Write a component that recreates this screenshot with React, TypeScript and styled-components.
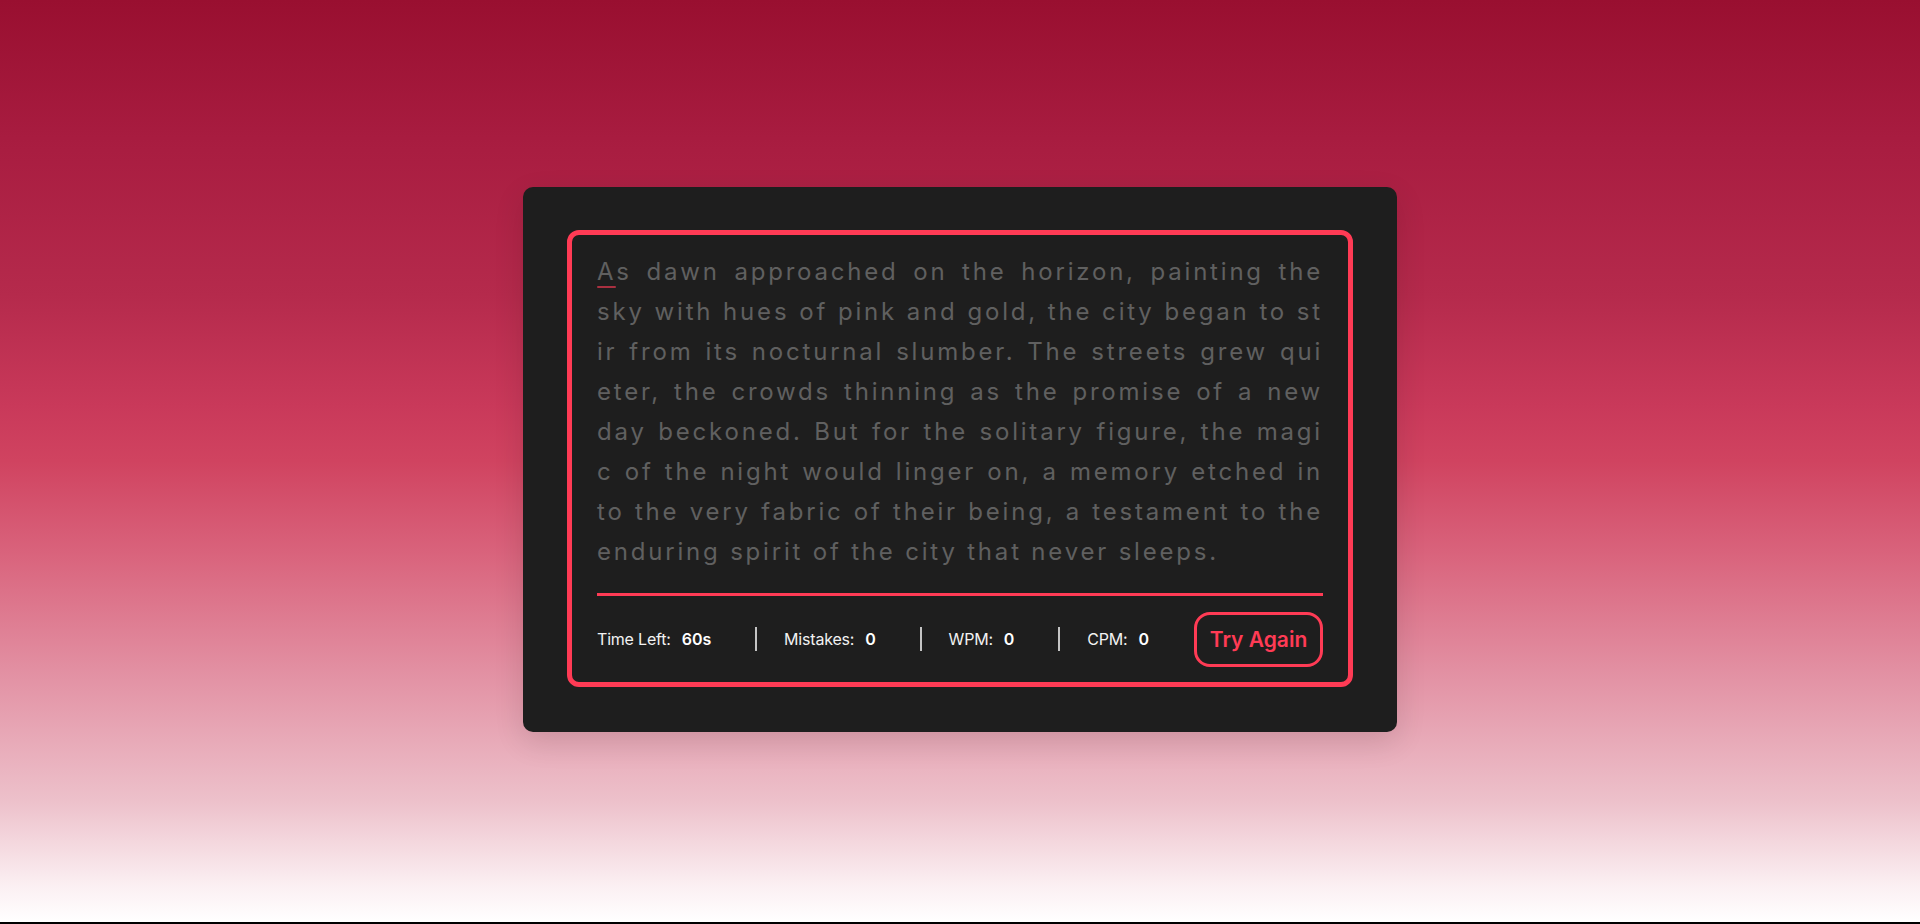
import React from "react";
import styled, { createGlobalStyle } from "styled-components";

const RED = "#ff3b55";

const GlobalStyle = createGlobalStyle`
  html { background: #000; }
  body {
    margin: 0;
    font-family: "Inter", "Liberation Sans", sans-serif;
  }
  * { box-sizing: border-box; }
`;

const Page = styled.main`
  height: calc(100vh - 2px);
  padding-bottom: 4px;
  display: flex;
  align-items: center;
  justify-content: center;
  background: linear-gradient(
    180deg,
    #990f30 0%,
    #a81c40 15%,
    #b52a4c 32%,
    #c9395a 44%,
    #d04360 50%,
    #d9637c 60%,
    #e394a6 74%,
    #edc1cb 87%,
    #fbeff2 96%,
    #ffffff 100%
  );
`;

const Card = styled.section`
  width: 874px;
  padding: 43px 44px 45px;
  background: #1e1e1e;
  border-radius: 10px;
  box-shadow: 0 10px 30px rgba(0, 0, 0, 0.12);
`;

const ContentBox = styled.div`
  border: 5px solid ${RED};
  border-radius: 12px;
  padding: 17px 25px 0;
`;

const TypingText = styled.p`
  margin: 0;
  font-family: "Inter", "Liberation Sans", sans-serif;
  font-size: 24px;
  line-height: 40px;
  letter-spacing: 2.8px;
  color: #606060;
`;

const Line = styled.span<{ $last?: boolean }>`
  display: block;
  text-align: justify;
  text-align-last: ${(p) => (p.$last ? "left" : "justify")};
`;

const Active = styled.span`
  position: relative;
  &::before {
    content: "";
    position: absolute;
    left: 0;
    right: 0;
    bottom: -2px;
    height: 2px;
    border-radius: 5px;
    background: ${RED};
    opacity: 0.62;
  }
`;

const Footer = styled.div`
  margin-top: 21px;
  border-top: 3px solid ${RED};
  padding: 16px 0 15px;
  display: flex;
  align-items: center;
  justify-content: space-between;
`;

const ResultList = styled.ul`
  width: 552px;
  margin: 0;
  padding: 0;
  list-style: none;
  display: flex;
  align-items: center;
  justify-content: space-between;
`;

const ResultItem = styled.li<{ $first?: boolean }>`
  display: flex;
  align-items: center;
  height: 24px;
  border-left: ${(p) => (p.$first ? "none" : "2px solid #c4c4c4")};
  padding-left: ${(p) => (p.$first ? "0" : "27px")};
`;

const Label = styled.span`
  font-size: 16px;
  color: #f2f2f2;
  letter-spacing: -0.2px;
`;

const Value = styled.b`
  margin-left: 11px;
  font-size: 16px;
  font-weight: 600;
  color: #ffffff;
`;

const TryButton = styled.button`
  width: 129px;
  height: 55px;
  background: transparent;
  border: 3px solid ${RED};
  border-radius: 16px;
  color: ${RED};
  font-family: "Inter", "Liberation Sans", sans-serif;
  font-size: 21px;
  font-weight: 600;
  cursor: pointer;
  padding: 0;
`;

const lines = [
  "s dawn approached on the horizon, painting the",
  "sky with hues of pink and gold, the city began to st",
  "ir from its nocturnal slumber. The streets grew qui",
  "eter, the crowds thinning as the promise of a new",
  "day beckoned. But for the solitary figure, the magi",
  "c of the night would linger on, a memory etched in",
  "to the very fabric of their being, a testament to the",
  "enduring spirit of the city that never sleeps.",
];

const stats = [
  { label: "Time Left:", value: "60s" },
  { label: "Mistakes:", value: "0" },
  { label: "WPM:", value: "0" },
  { label: "CPM:", value: "0" },
];

export default function App() {
  return (
    <>
      <GlobalStyle />
      <Page>
        <Card>
          <ContentBox>
            <TypingText>
              {lines.map((l, i) => (
                <Line key={i} $last={i === lines.length - 1}>
                  {i === 0 && <Active>A</Active>}
                  {l}
                </Line>
              ))}
            </TypingText>
            <Footer>
              <ResultList>
                {stats.map((s, i) => (
                  <ResultItem key={s.label} $first={i === 0}>
                    <Label>{s.label}</Label>
                    <Value>{s.value}</Value>
                  </ResultItem>
                ))}
              </ResultList>
              <TryButton>Try Again</TryButton>
            </Footer>
          </ContentBox>
        </Card>
      </Page>
    </>
  );
}
